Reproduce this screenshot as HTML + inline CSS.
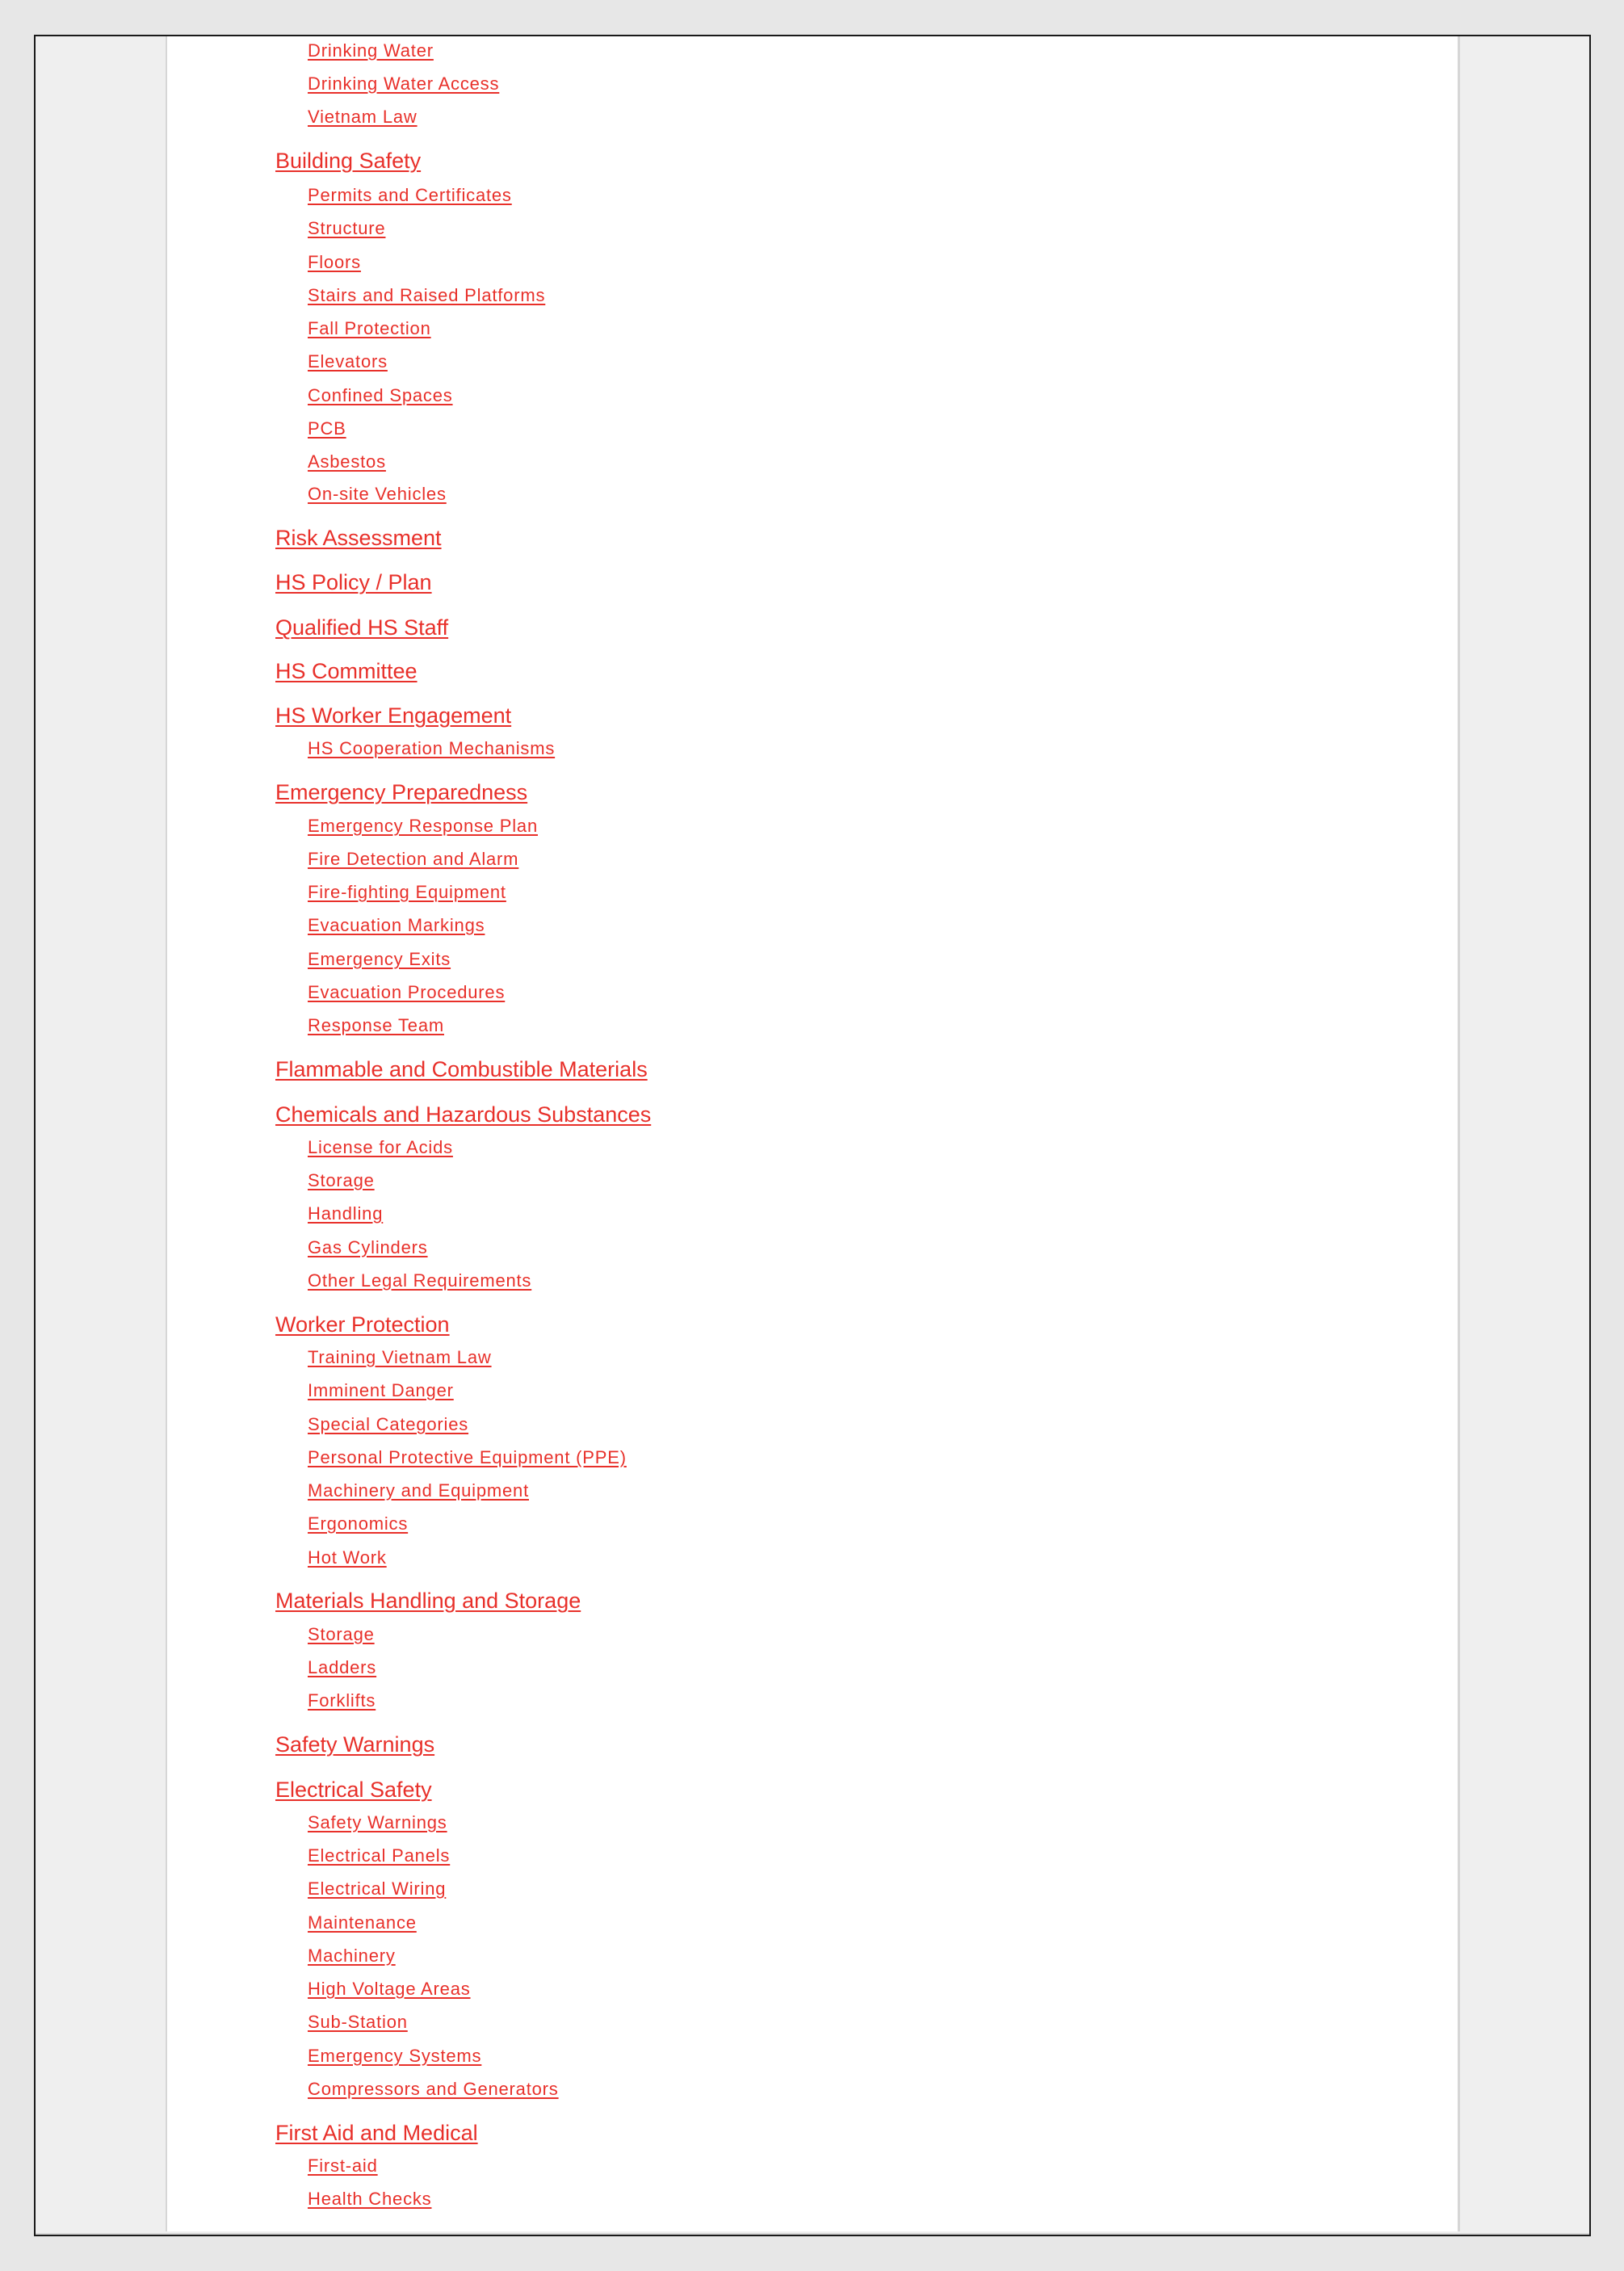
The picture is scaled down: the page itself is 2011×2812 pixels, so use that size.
<!DOCTYPE html>
<html><head><meta charset="utf-8"><style>
html,body{margin:0;padding:0;background:#e7e7e7;}
body{width:2011px;height:2812px;position:relative;overflow:hidden;}
.frame{position:absolute;left:42px;top:43px;width:1924px;height:2722px;border:2px solid #1a1a1a;background:#efefef;}
.page{position:absolute;left:161px;top:0;width:1598px;height:2718px;background:#fff;border-left:2px solid #d6d6d6;border-right:3px solid #d6d6d6;}
.bot{position:absolute;left:0;right:0;bottom:0;height:2px;background:#d6d6d6;}
a{position:absolute;color:#e8302a;text-decoration:underline;text-decoration-thickness:2px;text-underline-offset:3px;font-family:"Liberation Sans",sans-serif;white-space:nowrap;}
.s{left:381px;font-size:22px;line-height:30px;letter-spacing:0.8px;}
.m{left:341px;font-size:27px;line-height:34px;}
</style></head><body>
<div class="frame"><div class="page"></div><div class="bot"></div></div>
<a class="s" style="top:48px">Drinking Water</a>
<a class="s" style="top:89px">Drinking Water Access</a>
<a class="s" style="top:130px">Vietnam Law</a>
<a class="m" style="top:182px">Building Safety</a>
<a class="s" style="top:227px">Permits and Certificates</a>
<a class="s" style="top:268px">Structure</a>
<a class="s" style="top:310px">Floors</a>
<a class="s" style="top:351px">Stairs and Raised Platforms</a>
<a class="s" style="top:392px">Fall Protection</a>
<a class="s" style="top:433px">Elevators</a>
<a class="s" style="top:475px">Confined Spaces</a>
<a class="s" style="top:516px">PCB</a>
<a class="s" style="top:557px">Asbestos</a>
<a class="s" style="top:597px">On-site Vehicles</a>
<a class="m" style="top:649px">Risk Assessment</a>
<a class="m" style="top:704px">HS Policy / Plan</a>
<a class="m" style="top:760px">Qualified HS Staff</a>
<a class="m" style="top:814px">HS Committee</a>
<a class="m" style="top:869px">HS Worker Engagement</a>
<a class="s" style="top:912px">HS Cooperation Mechanisms</a>
<a class="m" style="top:964px">Emergency Preparedness</a>
<a class="s" style="top:1008px">Emergency Response Plan</a>
<a class="s" style="top:1049px">Fire Detection and Alarm</a>
<a class="s" style="top:1090px">Fire-fighting Equipment</a>
<a class="s" style="top:1131px">Evacuation Markings</a>
<a class="s" style="top:1173px">Emergency Exits</a>
<a class="s" style="top:1214px">Evacuation Procedures</a>
<a class="s" style="top:1255px">Response Team</a>
<a class="m" style="top:1307px">Flammable and Combustible Materials</a>
<a class="m" style="top:1363px">Chemicals and Hazardous Substances</a>
<a class="s" style="top:1406px">License for Acids</a>
<a class="s" style="top:1447px">Storage</a>
<a class="s" style="top:1488px">Handling</a>
<a class="s" style="top:1530px">Gas Cylinders</a>
<a class="s" style="top:1571px">Other Legal Requirements</a>
<a class="m" style="top:1623px">Worker Protection</a>
<a class="s" style="top:1666px">Training Vietnam Law</a>
<a class="s" style="top:1707px">Imminent Danger</a>
<a class="s" style="top:1749px">Special Categories</a>
<a class="s" style="top:1790px">Personal Protective Equipment (PPE)</a>
<a class="s" style="top:1831px">Machinery and Equipment</a>
<a class="s" style="top:1872px">Ergonomics</a>
<a class="s" style="top:1914px">Hot Work</a>
<a class="m" style="top:1965px">Materials Handling and Storage</a>
<a class="s" style="top:2009px">Storage</a>
<a class="s" style="top:2050px">Ladders</a>
<a class="s" style="top:2091px">Forklifts</a>
<a class="m" style="top:2143px">Safety Warnings</a>
<a class="m" style="top:2199px">Electrical Safety</a>
<a class="s" style="top:2242px">Safety Warnings</a>
<a class="s" style="top:2283px">Electrical Panels</a>
<a class="s" style="top:2324px">Electrical Wiring</a>
<a class="s" style="top:2366px">Maintenance</a>
<a class="s" style="top:2407px">Machinery</a>
<a class="s" style="top:2448px">High Voltage Areas</a>
<a class="s" style="top:2489px">Sub-Station</a>
<a class="s" style="top:2531px">Emergency Systems</a>
<a class="s" style="top:2572px">Compressors and Generators</a>
<a class="m" style="top:2624px">First Aid and Medical</a>
<a class="s" style="top:2667px">First-aid</a>
<a class="s" style="top:2708px">Health Checks</a>
</body></html>
